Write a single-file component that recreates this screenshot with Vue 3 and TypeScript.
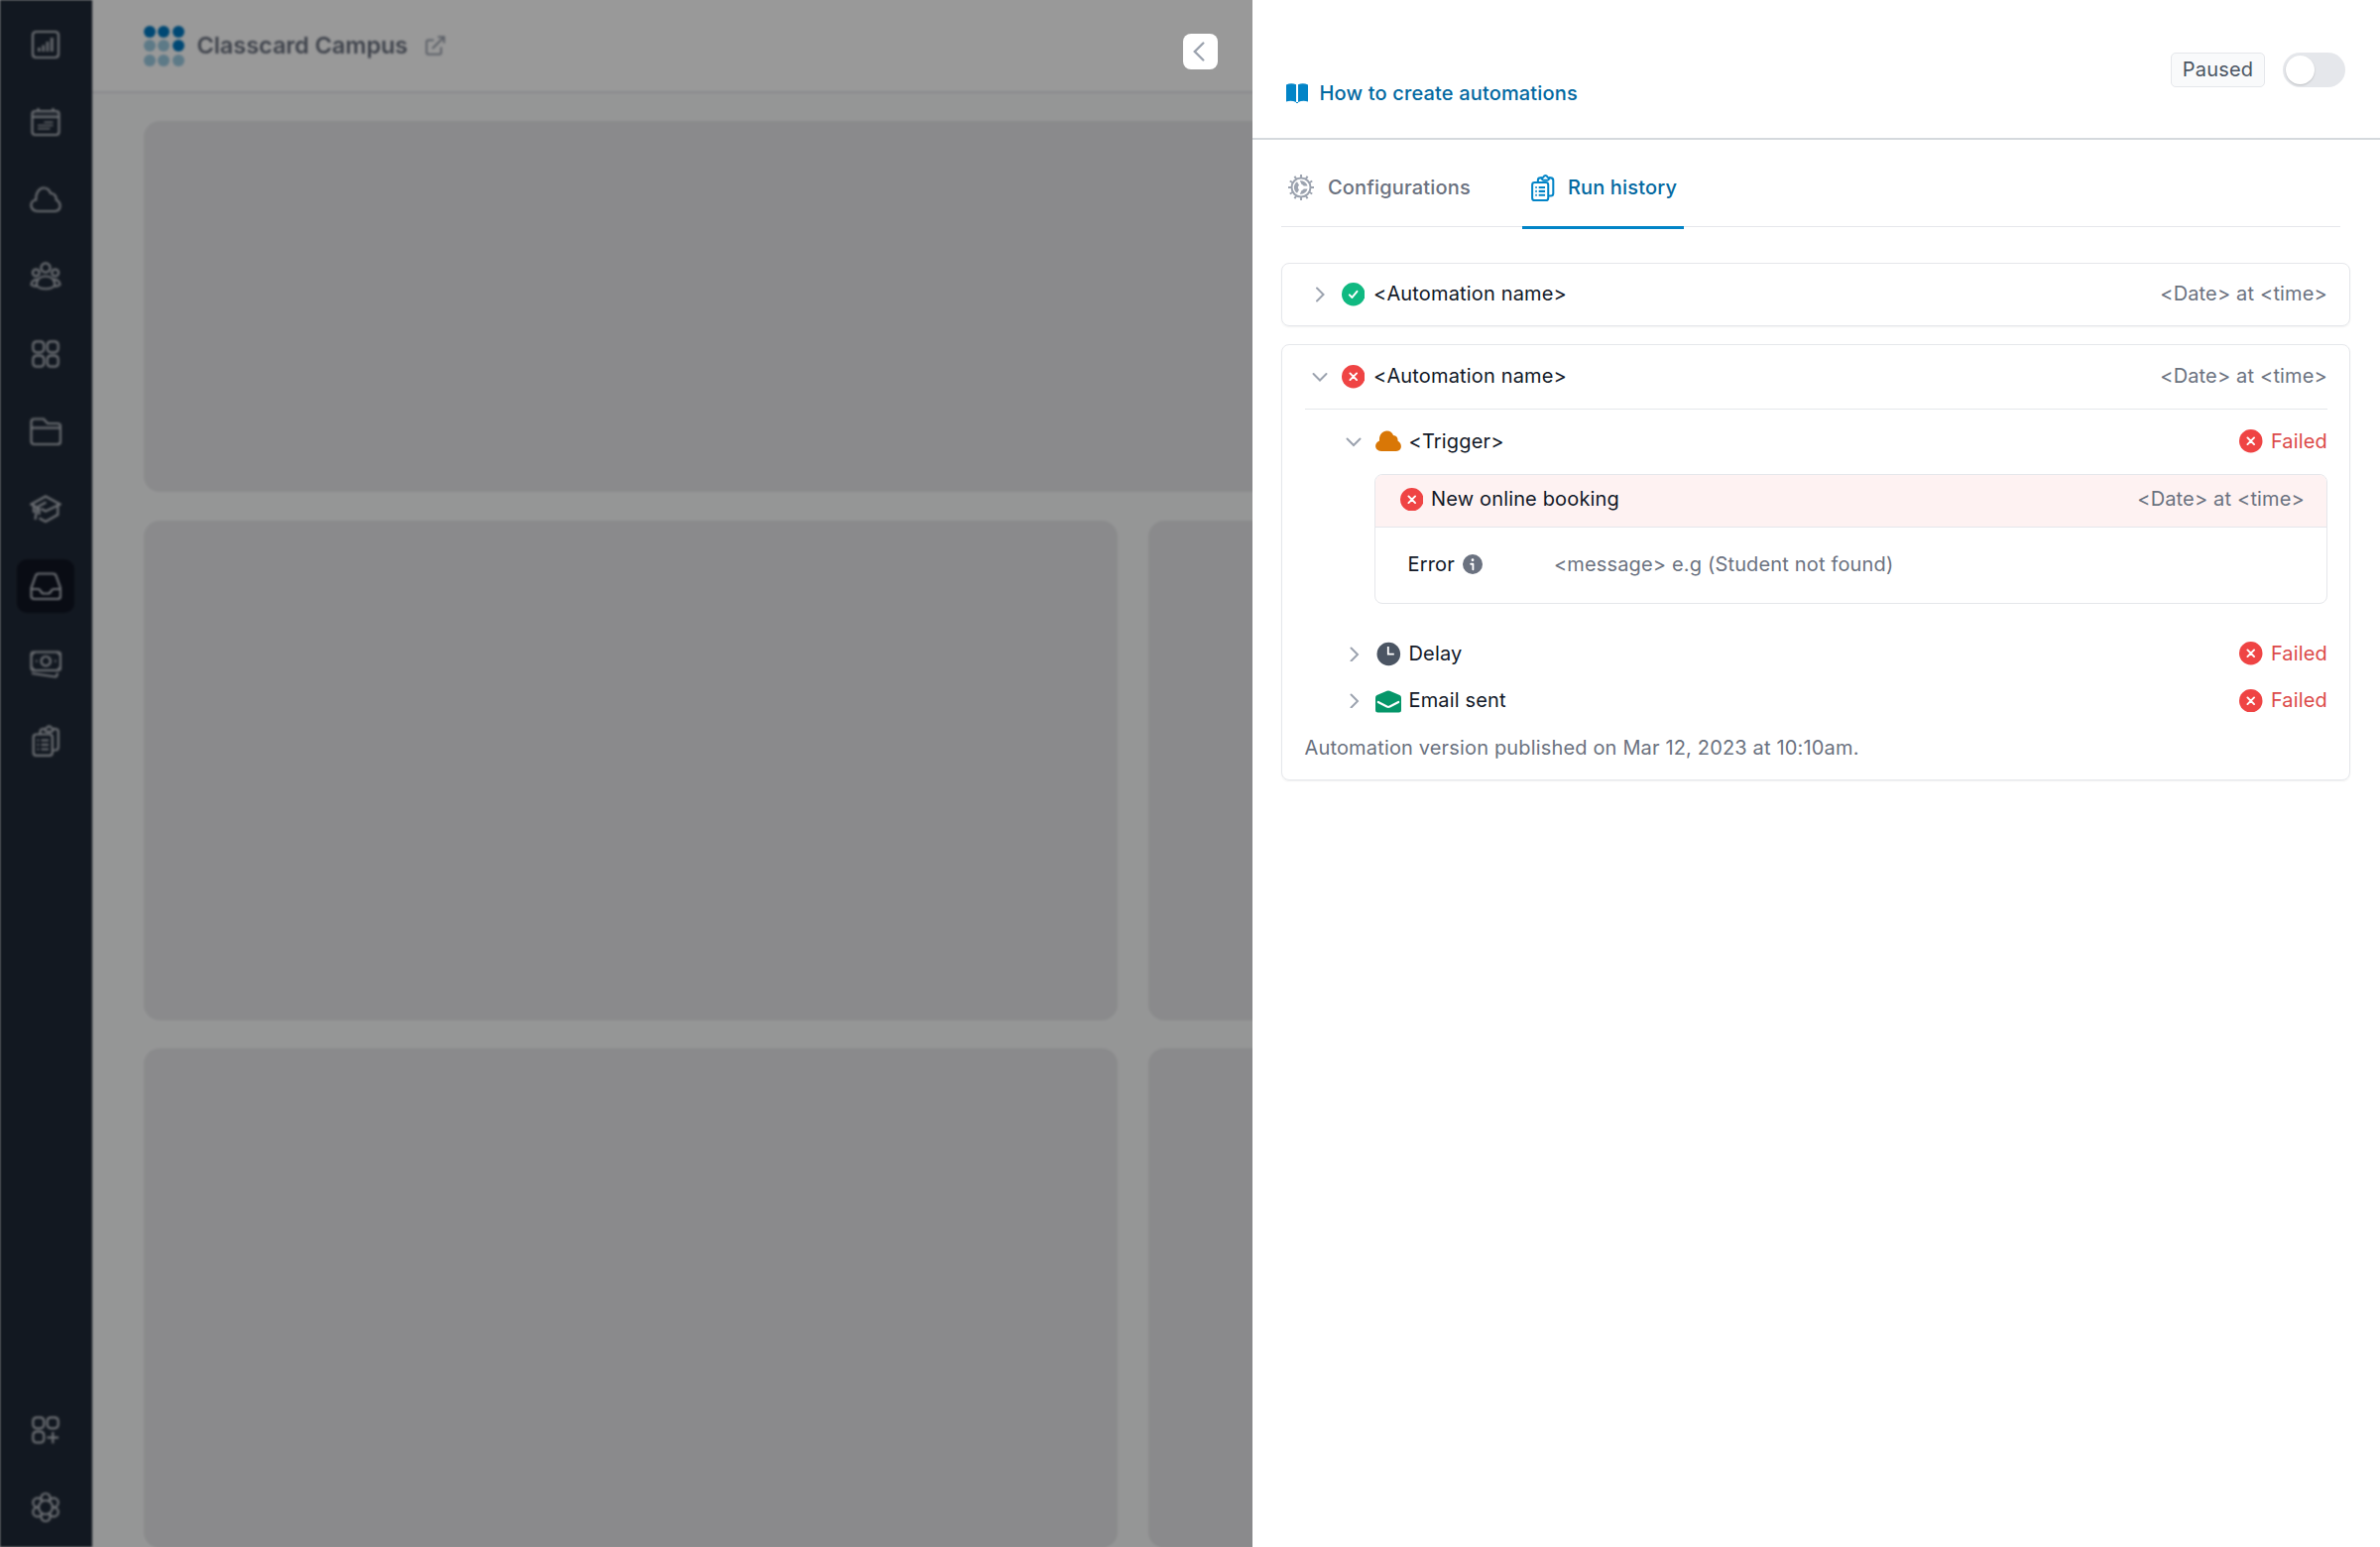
<script setup lang="ts">
interface NavItem {
  name: string
  paths: string[]
  solid?: string
  active?: boolean
}

interface Step {
  name: string
  icon: 'cloud' | 'clock' | 'mail'
  open: boolean
}

const clipboard: string[] = [
  'M6.500 9.500H20Q22.800 9.500 22.800 12.300V28Q22.800 30.800 20 30.800H6.500Q3.700 30.800 3.700 28V12.300Q3.700 9.500 6.500 9.500Z',
  'M10.500 9V6.800Q10.500 4 13.500 4H15M24 4H25.800Q28.800 4 28.800 7V22.500Q28.800 25.500 25.800 25.500H23.500',
  'M15 3.800Q17 3.800 17.300 2.700Q18 1.300 19.500 1.300T21.700 2.700Q22 3.800 24 3.800Q23.800 6.800 21.300 6.800H17.700Q15.200 6.800 15 3.800Z',
  'M7.500 15.500H9.200M11.500 15.500H19M7.500 20H9.200M11.500 20H19M7.500 24.500H9.200M11.500 24.500H19',
]

const square = (x: number, y: number): string =>
  `M${x + 4} ${y}h3q4 0 4 4v3q0 4 -4 4h-3q-4 0 -4 -4v-3q0 -4 4 -4z`

const ring = (x: number, y: number, r: number): string =>
  `M${x - r} ${y}a${r} ${r} 0 1 0 ${2 * r} 0a${r} ${r} 0 1 0 ${-2 * r} 0z`

const mainNav: NavItem[] = [
  {
    name: 'Reports',
    paths: ['M6.500 3H25.500Q29 3 29 6.500V25.500Q29 29 25.500 29H6.500Q3 29 3 25.500V6.500Q3 3 6.500 3Z'],
    solid: 'M8 19H10.800V23H8ZM12.300 16.500H15V23H12.300ZM16.500 13H19.200V23H16.500ZM20.800 9H23.800V23H20.800Z',
  },
  {
    name: 'Calendar',
    paths: ['M5.500 5H26.500Q29.500 5 29.500 8V26Q29.500 29 26.500 29H5.500Q2.500 29 2.500 26V8Q2.500 5 5.500 5Z', 'M2.500 11H29.500M8.500 2V5M23.500 2V5'],
    solid: 'M14.500 15.500H23.500V17H14.500ZM8 18.700H23.500V20.200H8ZM8 22H20.500V23.500H8ZM4 7.700H28V8.500H4Z',
  },
  {
    name: 'Bookings',
    paths: ['M8 28C-.500 27.500 -.500 17.500 6.300 16.500C5.800 9.500 9.500 4.500 14 4.500C18.500 4.500 20 7 21 10C24.500 10 27 12.500 26.700 16.500C32.500 20 31.500 27.600 25.500 28Z'],
  },
  {
    name: 'People',
    paths: [
      ring(16, 7, 4.600), ring(6.300, 12, 3.400), ring(25.700, 12, 3.400),
      'M6.700 24.500C7 18.500 11 15.500 16 15.500S25 18.500 25.300 24.500C22 29.500 10 29.500 6.700 24.500Z',
      'M9 19.200C5 18.300 1.800 20.300 1.500 24Q4 26 7 25.500M23 19.200C27 18.300 30.200 20.300 30.500 24Q28 26 25 25.500',
    ],
  },
  { name: 'Apps', paths: [square(3.300, 3.300), square(17.700, 3.300), square(3.300, 17.700), square(17.700, 17.700)] },
  {
    name: 'Files',
    paths: ['M4.500 3.500H14L18 8H28Q31 8 31 11V26Q31 29 28 29H4.500Q1.500 29 1.500 26V6.500Q1.500 3.500 4.500 3.500Z', 'M1.500 12.500H31'],
  },
  {
    name: 'Classes',
    paths: [
      'M7 14.500L1.500 11.500L16 3.500L30.500 11.500L16 18.500L11.500 16',
      'M28.300 13V22L16 29L9.500 25.500M16.500 9.500L9 13.500Q7 14.500 7 17L5.500 27M4 13.500V20M9.500 15V22',
    ],
  },
  {
    name: 'Inbox',
    active: true,
    paths: ['M9 3.500H23.500Q26 3.500 26.700 6L31 18V26Q31 29 28 29H4.500Q1.500 29 1.500 26V18L5.800 6Q6.500 3.500 9 3.500Z', 'M1.500 19H8Q10 19 10.800 20.800Q12 23.500 14 23.500H18.500Q20.500 23.500 21.700 20.800Q22.500 19 24.500 19H31'],
  },
  {
    name: 'Payments',
    paths: ['M4 4.500H28.500Q31 4.500 31 7V20.500Q31 23 28.500 23H4Q1.500 23 1.500 20.500V7Q1.500 4.500 4 4.500Z', ring(16.200, 13.700, 4.700), 'M6 13.700H7.500M25 13.700H26.500M2 26L25.500 29.500Q27.500 29.500 28 25.500'],
    solid: 'M2 5H6L2 9ZM30.500 5H26.500L30.500 9ZM2 22.500H6L2 18.500ZM30.500 22.500H26.500L30.500 18.500Z',
  },
  { name: 'Forms', paths: clipboard },
]

const petals: string[] = [0, 60, 120, 180, 240, 300].map((deg) => {
  const a = (deg * Math.PI) / 180
  return ring(+(16 + 9.400 * Math.sin(a)).toFixed(2), +(16 - 9.400 * Math.cos(a)).toFixed(2), 4.600)
})

const footNav: NavItem[] = [
  { name: 'Add-ons', paths: [square(3.300, 3.300), square(17.700, 3.300), square(3.300, 17.700), 'M23.300 18V29.500M17.500 23.700H29'] },
  { name: 'Settings', paths: [...petals, ring(16, 16, 7)] },
]

const dots: boolean[] = [true, true, true, false, false, true, false, false, false]
const teeth: number[] = Array.from({ length: 12 }, (_, i) => i * 30)
const steps: Step[] = [
  { name: '<Trigger>', icon: 'cloud', open: true },
  { name: 'Delay', icon: 'clock', open: false },
  { name: 'Email sent', icon: 'mail', open: false },
]
const stamp = '<Date> at <time>'
const automation = '<Automation name>'
const message = '<message> e.g (Student not found)'
</script>

<template>
  <div class="screen">
    <div class="backdrop">
      <nav class="sidebar">
        <div v-for="item in mainNav" :key="item.name" class="nav-item" :class="{ active: item.active }">
          <svg viewBox="0 0 32 32" class="nav-icon">
            <path v-for="(d, i) in item.paths" :key="i" :d="d" />
            <path v-if="item.solid" :d="item.solid" class="solid" />
          </svg>
        </div>
        <div class="spacer"></div>
        <div v-for="item in footNav" :key="item.name" class="nav-item">
          <svg viewBox="0 0 32 32" class="nav-icon masked">
            <path v-for="(d, i) in item.paths" :key="i" :d="d" />
          </svg>
        </div>
      </nav>
      <div class="main">
        <header class="topbar">
          <div class="logo">
            <span v-for="(on, i) in dots" :key="i" class="dot" :class="{ on }"></span>
          </div>
          <span class="brand">Classcard Campus</span>
          <svg class="external" viewBox="0 0 20 20">
            <path d="M8.500 4.500H3Q1.200 4.500 1.200 6.300V17Q1.200 18.800 3 18.800H14Q15.800 18.800 15.800 17V11.500M7 13L18.800 1.200M12.500 1.200H18.800V7.500" />
          </svg>
        </header>
        <div class="blocks">
          <div class="block wide"></div>
          <div class="block"></div>
          <div class="block"></div>
          <div class="block"></div>
          <div class="block"></div>
        </div>
      </div>
    </div>
    <div class="overlay">
      <button class="collapse" aria-label="Back">
        <svg viewBox="0 0 12 20"><path d="M10.300 1.500L1.800 10L10.300 18.500" /></svg>
      </button>
    </div>
    <section class="drawer">
      <header class="drawer-head">
        <a class="help">
          <svg class="book" viewBox="0 0 22 20">
            <path d="M0 1.500Q5-1 10 1.200V19Q5 17 0 18.500ZM12 1.200Q17-1 22 1.500V18.500Q17 17 12 19Z" />
            <path d="M10 19H12V20H10Z" />
          </svg>
          How to create automations
        </a>
        <div class="state">
          <span class="badge">Paused</span>
          <span class="toggle"><span class="knob"></span></span>
        </div>
      </header>
      <div class="tabs">
        <div class="tab">
          <svg class="gear" viewBox="0 0 28 28">
            <circle cx="14" cy="14" r="9.500" />
            <path v-for="t in teeth" :key="t" d="M14 4.500V1" :transform="`rotate(${t} 14 14)`" />
            <path class="hub" d="M10 8.200A7 7 0 0 0 10 19.800L12 16.300A3.200 3.200 0 0 1 12 11.700ZM12.800 7.200A7 7 0 0 1 20.500 12.500H16.700A3.200 3.200 0 0 0 14.600 10.900ZM20.500 15.500A7 7 0 0 1 12.800 20.800L14.600 17.100A3.200 3.200 0 0 0 16.700 15.500Z" />
          </svg>
          <span>Configurations</span>
        </div>
        <div class="tab current">
          <svg class="clip" viewBox="0 0 32 32">
            <path v-for="(d, i) in clipboard" :key="i" :d="d" />
          </svg>
          <span>Run history</span>
        </div>
      </div>
      <div class="runs">
        <article class="card">
          <div class="card-head">
            <svg class="chev right" viewBox="0 0 16 16"><path d="M5 1.500L11.500 8L5 14.500" /></svg>
            <svg class="mark ok" viewBox="0 0 24 24"><circle cx="12" cy="12" r="12" /><path d="M8 12.600L10.700 15.300L15.800 9" /></svg>
            <span class="name">{{ automation }}</span>
            <span class="stamp">{{ stamp }}</span>
          </div>
        </article>
        <article class="card expanded">
          <div class="card-head">
            <svg class="chev" viewBox="0 0 16 16"><path d="M1.500 5L8 11.500L14.500 5" /></svg>
            <svg class="mark bad" viewBox="0 0 24 24"><circle cx="12" cy="12" r="12" /><path d="M8.600 8.600L15.400 15.400M15.400 8.600L8.600 15.400" /></svg>
            <span class="name">{{ automation }}</span>
            <span class="stamp">{{ stamp }}</span>
          </div>
          <div class="steps">
            <div v-for="step in steps" :key="step.name" class="step">
              <div class="step-head">
                <svg v-if="step.open" class="chev" viewBox="0 0 16 16"><path d="M1.500 5.500L8 12L14.500 5.500" /></svg>
                <svg v-else class="chev right" viewBox="0 0 16 16"><path d="M5.500 2.500L12 9L5.500 15.500" /></svg>
                <svg v-if="step.icon === 'cloud'" class="glyph" viewBox="0 0 26 26">
                  <path fill="#d97706" d="M6 23C-1.500 22.500 -1.500 14.500 4 12.500C3.500 6.500 7 2.500 11.500 2.500C15 2.500 17.200 4.500 18 7C21.500 7.200 22.800 9.500 22.500 12.500C27.500 15.500 27 22.700 21 23Z" />
                </svg>
                <svg v-else-if="step.icon === 'clock'" class="glyph" viewBox="0 0 26 26">
                  <circle cx="13.300" cy="13.500" r="11.800" fill="#4b5563" />
                  <path d="M12.800 6V13.700H18.800" fill="none" stroke="#fff" stroke-width="1.800" />
                </svg>
                <svg v-else class="glyph" viewBox="0 0 26 26">
                  <path fill="#059669" d="M0 10.500Q0 8.800 1.500 8L11.500 3.700Q13 3.100 14.500 3.700L24.500 8Q26 8.800 26 10.500V23Q26 25.500 23.500 25.500H2.500Q0 25.500 0 23Z" />
                  <path d="M2.800 15L11.500 19.500Q13 20.200 14.500 19.500L23.200 15" fill="none" stroke="#fff" stroke-width="2.200" stroke-linecap="round" />
                </svg>
                <span class="name">{{ step.name }}</span>
                <span class="failed">
                  <svg class="mark bad" viewBox="0 0 24 24"><circle cx="12" cy="12" r="12" /><path d="M8.600 8.600L15.400 15.400M15.400 8.600L8.600 15.400" /></svg>
                  Failed
                </span>
              </div>
              <div v-if="step.open" class="detail">
                <div class="detail-head">
                  <svg class="mark bad" viewBox="0 0 24 24"><circle cx="12" cy="12" r="12" /><path d="M8.600 8.600L15.400 15.400M15.400 8.600L8.600 15.400" /></svg>
                  <span class="name">New online booking</span>
                  <span class="stamp">{{ stamp }}</span>
                </div>
                <div class="detail-body">
                  <span class="name">Error</span>
                  <svg class="info" viewBox="0 0 20 20">
                    <circle cx="10" cy="10" r="10" fill="#6b7280" />
                    <circle cx="10" cy="5.700" r="1.400" fill="#fff" />
                    <path d="M8.200 9.800H10.400V15.200" fill="none" stroke="#fff" stroke-width="1.900" stroke-linecap="round" stroke-linejoin="round" />
                  </svg>
                  <span class="message">{{ message }}</span>
                </div>
              </div>
            </div>
          </div>
          <p class="version">Automation version published on Mar 12, 2023 at 10:10am.</p>
        </article>
      </div>
    </section>
  </div>
</template>

<style>
body {
  background: #fff;
}
</style>

<style scoped>
.screen {
  position: relative;
  width: 2400px;
  height: 1560px;
  overflow: hidden;
  font-family: Inter, 'Liberation Sans', sans-serif;
  font-size: 20px;
  line-height: 30px;
  letter-spacing: 0.16px;
  color: #111827;
}
.screen * {
  box-sizing: border-box;
}
svg {
  display: block;
  flex: none;
}
.backdrop {
  display: flex;
  height: 1560px;
  filter: blur(1px);
}
.sidebar {
  display: flex;
  flex-direction: column;
  align-items: center;
  gap: 24px;
  width: 92.500px;
  padding: 18px 0 13px;
  background: #1f2937;
}
.nav-item {
  display: flex;
  align-items: center;
  justify-content: center;
  width: 58px;
  height: 54px;
  border-radius: 10px;
}
.nav-item.active {
  background: #0f1422;
}
.nav-icon {
  width: 32px;
  height: 32px;
  fill: none;
  stroke: #b4b9c1;
  stroke-width: 2.2;
}
.nav-icon .solid {
  fill: #a4a9b1;
  stroke: none;
}
.nav-icon.masked {
  fill: #1f2937;
}
.spacer {
  flex: 1;
}
.main {
  flex: 1;
  background: #f9fafb;
}
.topbar {
  display: flex;
  align-items: center;
  height: 94px;
  padding: 0 0 0 52px;
  background: #fff;
  border-bottom: 2px solid #e5e7eb;
}
.logo {
  display: grid;
  grid-template-columns: repeat(3, 12px);
  gap: 2.500px;
  margin-right: 13px;
}
.dot {
  width: 12px;
  height: 12px;
  border-radius: 50%;
  background: #9ccbe2;
}
.dot.on {
  background: #0079c2;
}
.brand {
  font-size: 23.5px;
  font-weight: 600;
  letter-spacing: -0.05px;
  color: #6b7280;
}
.external {
  width: 20px;
  height: 20px;
  margin-left: 18px;
  fill: none;
  stroke: #9ca3af;
  stroke-width: 2;
}
.blocks {
  display: grid;
  grid-template-columns: 982px 982px;
  grid-template-rows: 374px 504px 504px;
  gap: 28.500px 31px;
  padding: 28px 0 0 52px;
}
.block {
  border-radius: 16px;
  background: #e6e7e9;
}
.block.wide {
  grid-column: span 2;
}
.overlay {
  position: absolute;
  inset: 0;
  background: rgba(0, 0, 0, 0.4);
}
.collapse {
  position: absolute;
  top: 34px;
  left: 1193px;
  display: flex;
  align-items: center;
  justify-content: center;
  width: 35px;
  height: 36px;
  padding: 0 3px 0 0;
  border: none;
  border-radius: 8px;
  background: #fff;
}
.collapse svg {
  width: 12px;
  height: 20px;
  fill: none;
  stroke: #9ca3af;
  stroke-width: 2.4;
  stroke-linecap: round;
}
.drawer {
  position: absolute;
  inset: 0 0 0 1262.500px;
  background: #fff;
}
.drawer-head {
  display: flex;
  justify-content: space-between;
  align-items: flex-start;
  height: 141px;
  padding: 53px 35px 0 34px;
  border-bottom: 2px solid #d5d9dd;
}
.help {
  display: flex;
  align-items: center;
  gap: 12px;
  padding-top: 26px;
  font-weight: 500;
  color: #0369a1;
}
.book {
  width: 22px;
  height: 20px;
  fill: #0284c7;
}
.state {
  display: flex;
  gap: 18px;
}
.badge {
  width: 95px;
  height: 35px;
  border: 1.500px solid #e5e7eb;
  border-radius: 5px;
  background: #f9fafb;
  color: #4b5563;
  line-height: 32px;
  text-align: center;
}
.toggle {
  width: 63px;
  height: 35px;
  padding: 3px;
  border-radius: 18px;
  background: #e5e7eb;
}
.knob {
  display: block;
  width: 29px;
  height: 29px;
  border-radius: 50%;
  background: #fff;
  box-shadow: 0 1px 2px rgba(0, 0, 0, 0.18);
}
.tabs {
  display: flex;
  gap: 43px;
  height: 88px;
  margin: 0 40px 0 29.500px;
  border-bottom: 1px solid #e5e7eb;
}
.tab {
  display: flex;
  align-items: center;
  height: 90px;
  padding: 6px 9px 0 6px;
  font-weight: 500;
  color: #6b7280;
}
.tab.current {
  padding: 9px 7px 0 7px;
  border-bottom: 3px solid #0284c7;
  color: #0369a1;
}
.gear {
  width: 28px;
  height: 28px;
  margin-right: 13px;
  fill: none;
  stroke: #9ca3af;
  stroke-width: 2;
}
.gear .hub {
  fill: #9ca3af;
  stroke: none;
}
.clip {
  width: 27px;
  height: 27px;
  margin-right: 12px;
  fill: none;
  stroke: #0284c7;
  stroke-width: 2.4;
}
.runs {
  display: flex;
  flex-direction: column;
  gap: 18px;
  padding: 36px 30px 0 29.500px;
}
.card {
  height: 64px;
  padding: 0 22px 0 22.500px;
  border: 1.500px solid #e5e7eb;
  border-radius: 8px;
  box-shadow: 0 1px 2px rgba(0, 0, 0, 0.06);
}
.card.expanded {
  height: 440px;
}
.card-head {
  display: flex;
  align-items: center;
  height: 62px;
}
.card-head .name,
.card-head .stamp {
  margin-bottom: 2px;
}
.expanded .card-head {
  height: 65px;
  border-bottom: 1px solid #e5e7eb;
}
.chev {
  width: 16px;
  height: 16px;
  fill: none;
  stroke: #9ca3af;
  stroke-width: 2;
  stroke-linecap: round;
}
.card-head .chev {
  margin: 0 14px 0 7px;
}
.mark {
  width: 23.500px;
  height: 23.500px;
  fill: none;
  stroke: #fff;
  stroke-width: 2;
  stroke-linecap: round;
  stroke-linejoin: round;
}
.ok circle {
  fill: #10b981;
  stroke: none;
}
.bad circle {
  fill: #ef4444;
  stroke: none;
}
.card-head .mark {
  margin-right: 9px;
}
.stamp {
  margin-left: auto;
  color: #6b7280;
}
.steps {
  padding: 8px 0 0 41px;
}
.step-head {
  display: flex;
  align-items: center;
  height: 47.500px;
}
.step-head .glyph {
  width: 26px;
  height: 26px;
  margin: 0 8px 0 14px;
}
.failed {
  display: flex;
  align-items: center;
  gap: 8px;
  margin-left: auto;
  color: #dc4a4a;
}
.detail {
  height: 131.500px;
  margin: 9px 0 26px 29px;
  border: 1.500px solid #e5e7eb;
  border-radius: 8px;
  overflow: hidden;
}
.detail-head {
  display: flex;
  align-items: center;
  height: 53px;
  padding: 0 22px 2px 25px;
  border-bottom: 1.500px solid #e5e7eb;
  background: #fef2f2;
}
.detail-head .name,
.detail-head .stamp {
  margin-bottom: 1px;
}
.detail-head .mark {
  margin-right: 8px;
}
.detail-body {
  display: flex;
  align-items: center;
  height: 75px;
  padding-left: 33px;
}
.info {
  width: 20px;
  height: 20px;
  margin: 0 72px 0 8px;
}
.message,
.version {
  color: #6b7280;
}
.version {
  margin: 9px 0 0;
}
</style>
